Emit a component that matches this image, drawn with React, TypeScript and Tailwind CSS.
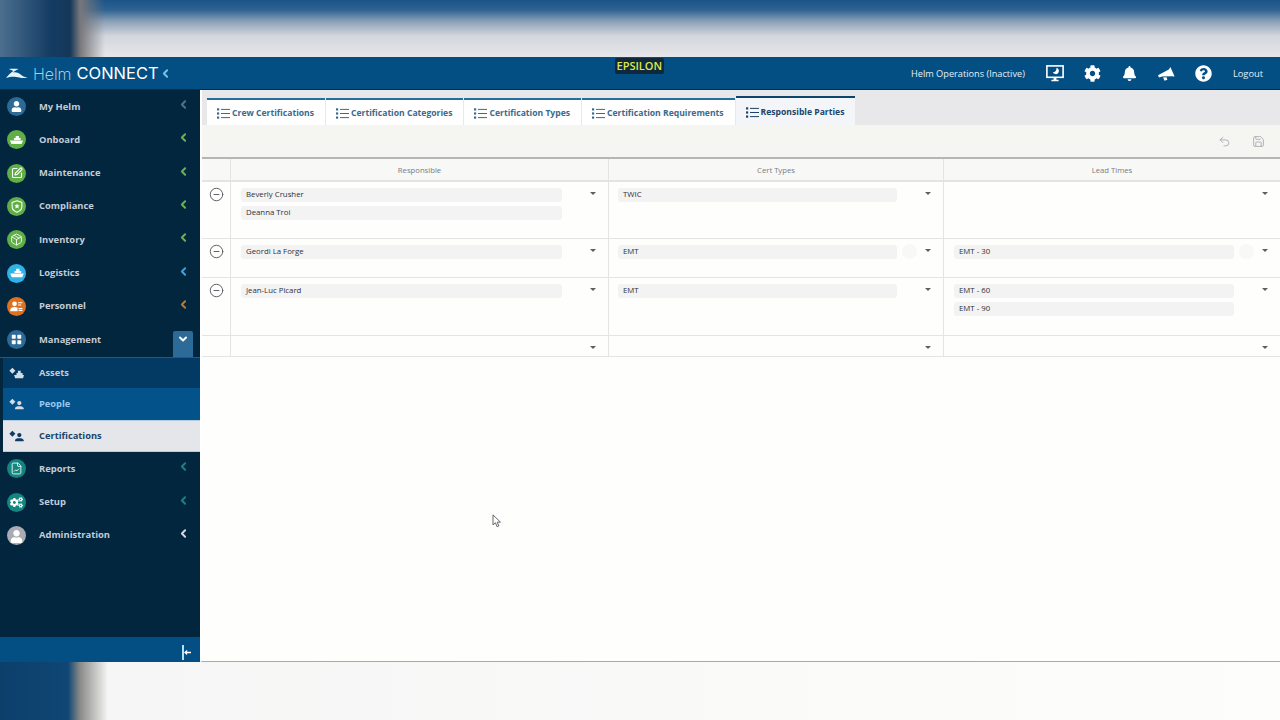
import { ReactNode } from 'react';
import { ChevronDown, ChevronLeft, CircleMinus, FileChartLine, Package, Save, SquarePen, Undo2 } from 'lucide-react';
import { FaBell, FaCog, FaCogs, FaQuestionCircle, FaUser } from 'react-icons/fa';

function BoatIcon({ className }: { className?: string }) {
  return (
    <svg viewBox="0 0 16 12" className={className} fill="currentColor">
      <path d="M7 1h4v2.500h2V6H5V3.500h2Z" />
      <path d="M0 6.500h16l-1.600 4.200c-.2.300-.4.300-.7.300H2.300c-.3 0-.5 0-.7-.3Z" />
    </svg>
  );
}

function ShieldIcon({ className }: { className?: string }) {
  return (
    <svg viewBox="0 0 14 16" className={className}>
      <path d="M7 1 13 3v5c0 3.400-2.600 5.800-6 7-3.400-1.200-6-3.600-6-7V3Z" fill="none" stroke="currentColor" strokeWidth="1.3" />
      <path d="m7 4.200 1 2.200 2.300.2-1.800 1.500.6 2.300-2.100-1.300-2.100 1.300.6-2.300-1.800-1.500 2.300-.2Z" fill="currentColor" />
    </svg>
  );
}

function PersonnelIcon({ className }: { className?: string }) {
  return (
    <svg viewBox="0 0 16 14" className={className} fill="currentColor">
      <circle cx="5.500" cy="3.600" r="3" />
      <path d="M0 13v-1.600C0 9 2.500 7.600 5.500 7.600c1.500 0 2.800.3 3.800 1V13Z" />
      <path d="M10 1.500h5.500v1.400H10ZM10 4.400h4v1.400h-4ZM10.500 9h5v1.200h-5ZM10.500 11.200h5v1.400h-5Z" />
    </svg>
  );
}

function TilesIcon({ className }: { className?: string }) {
  return (
    <svg viewBox="0 0 14 14" className={className} fill="currentColor">
      <rect x="1" y="1" width="5" height="5" rx="0.8" />
      <rect x="8" y="1" width="5" height="5" rx="0.8" />
      <rect x="1" y="8" width="5" height="5" rx="0.8" />
      <rect x="8" y="8" width="5" height="5" rx="0.8" />
    </svg>
  );
}

function MonitorIcon({ className }: { className?: string }) {
  return (
    <svg viewBox="0 0 18 17" className={className}>
      <rect x="0.9" y="0.9" width="16.200" height="11.400" fill="none" stroke="currentColor" strokeWidth="1.600" />
      <path d="M10.400 2.800a3.200 3.200 0 1 1-3.600 4.400 3.600 3.600 0 0 0 3.600-4.400Z" fill="currentColor" />
      <path d="M7.600 12.600h2.800v2.200h2.200v1.400H5.400v-1.400h2.200Z" fill="currentColor" />
    </svg>
  );
}

function HornIcon({ className }: { className?: string }) {
  return (
    <svg viewBox="0 0 17 15" className={className} fill="currentColor">
      <path d="M0 9.200 10.800 3.400 12.400 1l4.200 9.400-3-.1-9.300.3L1 11.600Z" />
      <path d="M5 11.400l3.600-.2.800 2.600-2.800 1Z" />
    </svg>
  );
}

function ListIcon({ className }: { className?: string }) {
  return (
    <svg viewBox="0 0 13 11" className={className} fill="currentColor">
      <rect x="0" y="0.300" width="2.200" height="2.200" />
      <rect x="0" y="4.400" width="2.200" height="2.200" />
      <rect x="0" y="8.500" width="2.200" height="2.200" />
      <rect x="4" y="0.900" width="9" height="1" />
      <rect x="4" y="5" width="9" height="1" />
      <rect x="4" y="9.100" width="9" height="1" />
    </svg>
  );
}

type NavItem = {
  label: string;
  icon: ReactNode;
  circle: string;
  chevron: string;
};

const topNav: NavItem[] = [
  { label: 'My Helm', icon: <FaUser className="h-[11px] w-[11px]" />, circle: 'bg-[#2c6a98]', chevron: 'text-[#4d7391]' },
  { label: 'Onboard', icon: <BoatIcon className="h-[10px] w-[13px]" />, circle: 'bg-[#5fae46]', chevron: 'text-[#6db24f]' },
  { label: 'Maintenance', icon: <SquarePen className="h-[12px] w-[12px]" strokeWidth={2.2} />, circle: 'bg-[#5fae46]', chevron: 'text-[#6db24f]' },
  { label: 'Compliance', icon: <ShieldIcon className="h-[13px] w-[12px]" />, circle: 'bg-[#5fae46]', chevron: 'text-[#6db24f]' },
  { label: 'Inventory', icon: <Package className="h-[13px] w-[13px]" strokeWidth={1.6} />, circle: 'bg-[#5fae46]', chevron: 'text-[#6db24f]' },
  { label: 'Logistics', icon: <BoatIcon className="h-[10px] w-[14px]" />, circle: 'bg-[#2fb2e6]', chevron: 'text-[#3aa5db]' },
  { label: 'Personnel', icon: <PersonnelIcon className="h-[11px] w-[13px]" />, circle: 'bg-[#dd711f]', chevron: 'text-[#b97a35]' },
];

const bottomNav: NavItem[] = [
  { label: 'Reports', icon: <FileChartLine className="h-[13px] w-[13px]" strokeWidth={1.6} />, circle: 'bg-[#14857f]', chevron: 'text-[#1f7f86]' },
  { label: 'Setup', icon: <FaCogs className="h-[13px] w-[13px]" />, circle: 'bg-[#14857f]', chevron: 'text-[#1f7f86]' },
  { label: 'Administration', icon: <FaUser className="mt-[2px] h-[13px] w-[13px]" />, circle: 'bg-[#a9adb3]', chevron: 'text-[#d5d9de]' },
];

const tabs = ['Crew Certifications', 'Certification Categories', 'Certification Types', 'Certification Requirements'];

type Row = {
  h: string;
  responsible: string[];
  certs: string[];
  leads: string[];
  removable: boolean;
  ghost?: boolean;
};

const rows: Row[] = [
  { h: 'h-[57px]', responsible: ['Beverly Crusher', 'Deanna Troi'], certs: ['TWIC'], leads: [], removable: true },
  { h: 'h-[39px]', responsible: ['Geordi La Forge'], certs: ['EMT'], leads: ['EMT - 30'], removable: true, ghost: true },
  { h: 'h-[58px]', responsible: ['Jean-Luc Picard'], certs: ['EMT'], leads: ['EMT - 60', 'EMT - 90'], removable: true },
  { h: 'h-[21px]', responsible: [], certs: [], leads: [], removable: false },
];

function Caret() {
  return <div className="h-0 w-0 border-x-[3.5px] border-t-[3.5px] border-x-transparent border-t-[#5a5f66]" />;
}

function SideRow({ item }: { item: NavItem }) {
  return (
    <div className="flex h-[33.3px] items-center pl-[7px]">
      <div className={`flex h-[19px] w-[19px] items-center justify-center overflow-hidden rounded-full text-white ${item.circle}`}>
        {item.icon}
      </div>
      <span className="ml-[13px] flex-1 text-[9.4px] font-bold text-[#c3ccd6]">{item.label}</span>
      <ChevronLeft className={`mr-[10.500px] mb-[4px] h-[13px] w-[13px] ${item.chevron}`} strokeWidth={3.6} />
    </div>
  );
}

function SubIcon({ className, boat }: { className: string; boat?: boolean }) {
  return (
    <svg viewBox="0 0 16 12" className={`h-[12px] w-[15px] ${className}`} fill="currentColor">
      <path d="M3.600 .4 6.800 3.600 3.600 6.800 .4 3.600Z" />
      {boat ? (
        <path d="M9.500 3.500h3V6h2v2H16l-1 3.500H6.500L5.500 8h2.500V6h1.500Z" />
      ) : (
        <>
          <circle cx="11" cy="5" r="2.300" />
          <path d="M6.400 11.500v-1c0-1.500 2-2.200 4.600-2.200s4.600.7 4.600 2.200v1Z" />
        </>
      )}
    </svg>
  );
}

function SubRow({ label, tone }: { label: string; tone: 'assets' | 'people' | 'certs' }) {
  const styles = {
    assets: 'h-[30.5px] bg-[#033a64] text-[#c3ccd6]',
    people: 'h-[32px] bg-[#03538a] text-[#9cc7ea]',
    certs: 'h-[32px] bg-[#e4e6ea] text-[#1d4468] border-y border-[#b5cbdd]',
  }[tone];
  return (
    <div className={`flex items-center pl-[6px] ${styles}`}>
      <SubIcon className={tone === 'certs' ? 'text-[#0f3c66]' : 'text-[#d3dbe3]'} boat={tone === 'assets'} />
      <span className="ml-[15px] text-[9.3px] font-bold">{label}</span>
    </div>
  );
}

function Tab({ label, active }: { label: string; active?: boolean }) {
  return (
    <div
      className={
        active
          ? 'flex h-[29px] items-center gap-[2px] border-t-[2px] border-[#0c4470] bg-[#f4f5f8] pt-[1px] pr-[11px] pl-[10px] text-[#1d4468]'
          : 'flex h-[27px] items-center gap-[2px] border-t-[2px] border-[#256d9c] bg-white pt-[1px] pr-[11px] pl-[10px] text-[#3b6a8e]'
      }
    >
      <ListIcon className="h-[11px] w-[13px]" />
      <span className="text-[8.6px] font-bold whitespace-nowrap">{label}</span>
    </div>
  );
}

function Chips({ items }: { items: string[] }) {
  return (
    <div className="flex flex-1 flex-col gap-[4px]">
      {items.map((t) => (
        <div key={t} className="flex h-[14px] items-center rounded-[3px] bg-[#f3f3f4] pl-[5px] text-[7.8px] font-medium text-[#2c3138]">
          {t}
        </div>
      ))}
    </div>
  );
}

function Cell({ items, className, ghost }: { items: string[]; className: string; ghost?: boolean }) {
  return (
    <div className={`relative flex border-[#e2e4e6] pt-[6px] ${className}`}>
      <Chips items={items} />
      <div className="flex w-[46px] justify-end pt-[4px] pr-[12px]">
        <Caret />
      </div>
      {ghost && <div className="absolute top-[5px] right-[26px] h-[15px] w-[15px] rounded-full bg-[#f8f8f6]" />}
    </div>
  );
}

export default function App() {
  return (
    <div className="relative flex h-[720px] w-[1280px] flex-col overflow-hidden bg-white font-['Open_Sans','Noto_Sans',sans-serif]">
      {/* Blurred page behind the app */}
      <div className="h-[57px] bg-[linear-gradient(to_bottom,#1a5488_0px,#2f6392_10px,#8fa3b8_22px,#d3d6dd_36px,#e6e7ea_57px)]">
        <div className="h-full w-[105px] bg-[linear-gradient(to_right,#4c6f8f,#143d63_50px,#14375a_70px,#77777c_80px,transparent_105px)]" />
      </div>

      <div className="flex h-[33px] items-center border-b border-[#0a2c48] bg-[#034f84] pt-[1px] text-white">
        <div className="flex w-[200px] items-center pl-[6px]">
          <svg viewBox="0 0 24 12" className="h-[11px] w-[22px]" fill="#e6f3fb">
            <path d="M3 1C7 .6 10 .7 14 1.200 11 2.400 9 3.600 7.600 5 11 4.200 14 5.400 17 8c2 1.500 4 2.200 7 2.800-6 .8-11-.8-15-1.200-3-.2-5.500.3-9 1.400C2 8 5 5.400 8 3.200 6.500 2.500 5 1.800 3 1Z" />
          </svg>
          <span className="ml-[5px] font-['Inter',sans-serif] text-[16px] leading-none font-extralight text-[#cfe3f2]">Helm</span>
          <span className="ml-[5px] font-['Inter',sans-serif] text-[16.5px] leading-none font-normal">CONNECT</span>
          <ChevronLeft className="h-[13px] w-[13px] text-[#7cc0ea]" strokeWidth={3.5} />
        </div>
        <div className="flex-1" />
        <span className="text-[9.2px] text-[#e6eef5]">Helm Operations (Inactive)</span>
        <MonitorIcon className="ml-[21px] h-[17px] w-[18px]" />
        <FaCog className="ml-[20px] h-[17px] w-[17px]" />
        <FaBell className="ml-[21px] h-[15px] w-[15px]" />
        <HornIcon className="ml-[21px] h-[15px] w-[17px]" />
        <FaQuestionCircle className="ml-[20px] h-[17px] w-[17px]" />
        <span className="mr-[17px] ml-[21px] text-[9.3px] text-[#e6eef5]">Logout</span>
      </div>

      {/* Environment badge over the header */}
      <span className="absolute top-[58px] left-[615px] rounded-[2px] bg-[#10283c] px-[1.5px] text-[11px] leading-[16px] font-semibold text-[#dcea4c]">EPSILON</span>

      <div className="flex h-[572px]">
        <aside className="flex w-[200px] flex-col bg-[#03263f]">
          <div className="flex-1">
            {topNav.map((n) => (
              <SideRow key={n.label} item={n} />
            ))}
            <div className="flex h-[33.5px] items-center pl-[7px]">
              <div className="flex h-[19px] w-[19px] items-center justify-center rounded-full bg-[#2c6a98] text-white">
                <TilesIcon className="h-[11px] w-[11px]" />
              </div>
              <span className="ml-[13px] flex-1 text-[9.4px] font-bold text-[#c3ccd6]">Management</span>
              <div className="mr-[7px] flex h-[26px] w-[20px] justify-center self-end rounded-t-[2px] bg-[#2c6a98] pt-[2px]">
                <ChevronDown className="h-[12px] w-[12px] text-white" strokeWidth={4} />
              </div>
            </div>
            <div className="border-t border-[#1e5a86] pl-[3px]">
              <SubRow label="Assets" tone="assets" />
              <SubRow label="People" tone="people" />
              <SubRow label="Certifications" tone="certs" />
            </div>
            {bottomNav.map((n) => (
              <SideRow key={n.label} item={n} />
            ))}
          </div>
          <div className="flex h-[25px] items-center justify-end bg-[#034f84] pt-[5px] pr-[9px]">
            <div className="h-[15px] w-[2px] bg-[#b5e0f5]" />
            <svg viewBox="0 0 10 10" className="h-[7px] w-[7px]" fill="#ffffff">
              <path d="M0 5 4.500 1V4H10v2H4.500v3Z" />
            </svg>
          </div>
        </aside>

        <main className="flex flex-1 flex-col border-b border-l-[2px] border-[#a9a9a9] border-l-white bg-[#fefefc]">
          <div className="flex h-[35px] items-end gap-[1px] bg-[#e8e8ea] pl-[5px]">
            {tabs.map((t) => (
              <Tab key={t} label={t} />
            ))}
            <Tab label="Responsible Parties" active />
          </div>
          <div className="flex h-[34px] items-center justify-end gap-[21px] border-b-[2px] border-[#b5b5b5] bg-[#f5f5f2] pr-[15px]">
            <Undo2 className="h-[13px] w-[13px] text-[#a5aab0]" strokeWidth={1.6} />
            <Save className="h-[13px] w-[13px] text-[#a5aab0]" strokeWidth={1.6} />
          </div>

          {/* Grid header */}
          <div className="flex h-[23px] items-center border-b-[2px] border-[#e4e4e4] bg-[#f8f8f7] text-[7.7px] text-[#777c82]">
            <div className="h-full w-[29px] border-r border-[#e2e4e6]" />
            <div className="flex h-full w-[378px] items-center justify-center border-r border-[#e2e4e6] pt-[2px]">Responsible</div>
            <div className="flex h-full w-[335px] items-center justify-center border-r border-[#e2e4e6] pt-[2px]">Cert Types</div>
            <div className="flex h-full flex-1 items-center justify-center pt-[2px]">Lead Times</div>
          </div>

          {rows.map((r, i) => (
            <div key={i} className={`flex border-b border-[#e2e4e6] ${r.h}`}>
              <div className="flex w-[29px] justify-center border-r border-[#e2e4e6] pt-[5px]">
                {r.removable && <CircleMinus className="h-[15px] w-[15px] text-[#55595f]" strokeWidth={1.5} />}
              </div>
              <Cell items={r.responsible} className="w-[378px] border-r pl-[10px]" />
              <Cell items={r.certs} className="w-[335px] border-r pl-[9px]" ghost={r.ghost} />
              <Cell items={r.leads} className="flex-1 pl-[10px]" ghost={r.ghost} />
            </div>
          ))}

          <div className="relative flex-1">
            {/* Mouse pointer */}
            <svg viewBox="0 0 10 16" className="absolute top-[157px] left-[290px] h-[14px] w-[9px]" fill="#ffffff" stroke="#5d6167" strokeWidth="1.1">
              <path d="M1 1v11.500l2.800-2.500 1.900 4.600 2-.9-1.900-4.400H9.500Z" />
            </svg>
          </div>
        </main>
      </div>

      <div className="flex-1 bg-[linear-gradient(to_right,#0d3f6b_0px,#0f4673_68px,#8a8a88_80px,#f6f6f6_108px,#fdfdfb_100%)]" />
    </div>
  );
}
